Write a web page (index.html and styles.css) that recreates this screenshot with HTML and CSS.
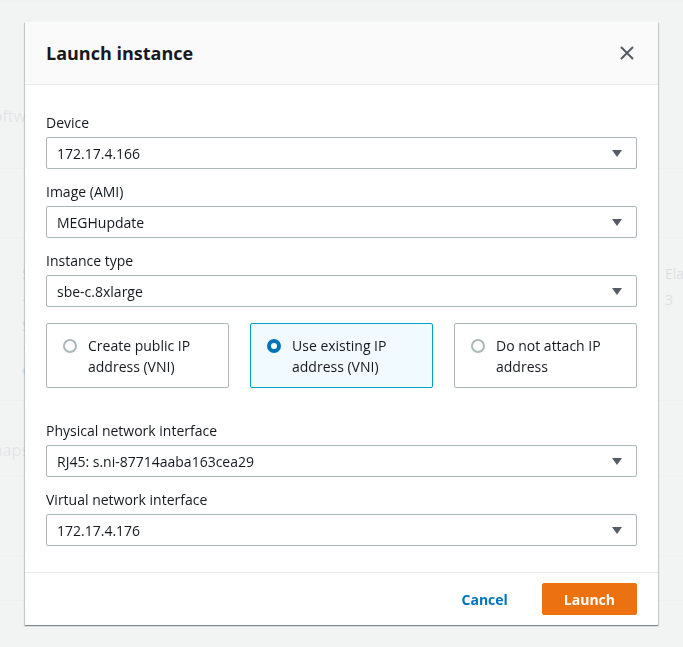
FILE: index.html
```html
<!DOCTYPE html>
<html lang="en">
<head>
  <meta charset="UTF-8" />
  <meta name="viewport" content="width=device-width, initial-scale=1" />
  <title>Launch instance</title>
  <link rel="stylesheet" href="styles.css">
</head>
<body>
  <!-- page behind the modal -->
  <div class="page">
    <div class="page-top">
      <span class="crumb">Software</span>
    </div>
    <div class="page-band"></div>
    <div class="page-cards">
      <div class="page-col">
        <p>Status</p>
        <p>-</p>
        <p>Storage</p>
        <p>1 TB</p>
        <span class="dot"></span>
      </div>
      <div class="page-col right">
        <p>Elastic IPs</p>
        <p>3</p>
      </div>
    </div>
    <div class="page-row"><span class="crumb">Snapshots</span></div>
    <div class="page-row tall"></div>
    <div class="page-row short"></div>
  </div>

  <div class="overlay">
    <div class="modal">
      <div class="modal-header">
        <h2>Launch instance</h2>
        <button class="close" type="button">
          <svg width="14" height="14" viewBox="0 0 14 14"><path d="M1 1L13 13M13 1L1 13" /></svg>
        </button>
      </div>

      <div class="modal-body">
        <div class="field">
          <label>Device</label>
          <div class="select"><span>172.17.4.166</span><i class="caret"></i></div>
        </div>
        <div class="field">
          <label>Image (AMI)</label>
          <div class="select"><span>MEGHupdate</span><i class="caret"></i></div>
        </div>
        <div class="field last">
          <label>Instance type</label>
          <div class="select"><span>sbe-c.8xlarge</span><i class="caret"></i></div>
        </div>

        <div class="tiles">
          <div class="tile">
            <span class="radio"></span>
            <span class="tile-text">Create public IP address (VNI)</span>
          </div>
          <div class="tile selected">
            <span class="radio"></span>
            <span class="tile-text">Use existing IP address (VNI)</span>
          </div>
          <div class="tile">
            <span class="radio"></span>
            <span class="tile-text">Do not attach IP address</span>
          </div>
        </div>

        <div class="field">
          <label>Physical network interface</label>
          <div class="select"><span>RJ45: s.ni-87714aaba163cea29</span><i class="caret"></i></div>
        </div>
        <div class="field">
          <label>Virtual network interface</label>
          <div class="select"><span>172.17.4.176</span><i class="caret"></i></div>
        </div>
      </div>

      <div class="modal-footer">
        <button class="btn-link" type="button">Cancel</button>
        <button class="btn-primary" type="button">Launch</button>
      </div>
    </div>
  </div>
</body>
</html>
```

FILE: styles.css
```css
body {
  margin: 0;
  font-family: 'Open Sans', 'Liberation Sans', sans-serif;
  font-size: 14px;
  color: #16191f;
  background: #f2f3f3;
}

/* background page */
.page {
  border-top: 2px solid #dfe3e3;
  overflow: hidden;
  height: 645px;
}

.page-top {
  height: 167px;
  border-bottom: 1px solid #d5dbdb;
  padding-top: 103px;
  box-sizing: border-box;
}

.crumb {
  display: inline-block;
  margin-left: -16px;
  font-size: 16px;
  color: #545b64;
}

.page-band {
  height: 68px;
  border-bottom: 1px solid #d5dbdb;
}

.page-cards {
  height: 163px;
  border-bottom: 1px solid #d5dbdb;
  display: flex;
  justify-content: space-between;
  padding-top: 26px;
  box-sizing: border-box;
}

/* only the edge of each column shows beside the modal */
.page-col {
  margin-left: 22px;
  width: 3px;
  overflow: hidden;
  white-space: nowrap;
  line-height: 20px;
}

.page-col p {
  margin: 0 0 6px;
}

.page-col.right {
  width: 18px;
  margin-left: 0;
}

.dot {
  display: block;
  width: 6px;
  height: 6px;
  border-radius: 50%;
  background: #0073bb;
}

.page-row {
  height: 76px;
  border-bottom: 1px solid #d5dbdb;
  padding-top: 38px;
  box-sizing: border-box;
}

.page-row.tall {
  height: 79px;
}

.page-row.short {
  height: 45px;
}

/* modal */
.overlay {
  position: fixed;
  inset: 0;
  background: rgba(242, 243, 243, 0.9);
  display: flex;
  align-items: center;
  justify-content: center;
}

.modal {
  width: 633px;
  background: #fff;
  box-shadow: 0 1px 1px 0 rgba(0, 28, 36, 0.3), 1px 1px 1px 0 rgba(0, 28, 36, 0.15), -1px 1px 1px 0 rgba(0, 28, 36, 0.15);
}

.modal-header {
  display: flex;
  align-items: center;
  justify-content: space-between;
  padding: 20px 21px;
  background: #fafafa;
  border-bottom: 1px solid #eaeded;
}

.modal-header h2 {
  margin: 0;
  font-size: 18px;
  line-height: 22px;
  font-weight: 700;
}

.close {
  border: none;
  background: none;
  padding: 0;
  margin-right: 3px;
  display: flex;
}

.close path {
  stroke: #545b64;
  stroke-width: 2;
}

.modal-body {
  padding: 26px 21px;
}

.field {
  margin-bottom: 11px;
}

.field:last-child {
  margin-bottom: 0;
}

.field.last {
  margin-bottom: 16px;
}

.field label {
  display: block;
  line-height: 24px;
  margin-bottom: 2px;
}

.select {
  height: 32px;
  box-sizing: border-box;
  border: 1px solid #aab7b8;
  border-radius: 2px;
  padding: 0 14px 0 10px;
  display: flex;
  align-items: center;
  justify-content: space-between;
}

.caret {
  width: 0;
  height: 0;
  border-left: 5.5px solid transparent;
  border-right: 5.5px solid transparent;
  border-top: 7px solid #545b64;
}

.tiles {
  display: grid;
  grid-template-columns: repeat(3, 1fr);
  gap: 21px;
  margin-bottom: 31px;
}

.tile {
  display: flex;
  align-items: flex-start;
  gap: 11px;
  border: 1px solid #aab7b8;
  border-radius: 2px;
  padding: 11px 16px 10px;
  line-height: 21px;
}

.tile.selected {
  border-color: #00a1c9;
  background: #f1faff;
}

.radio {
  flex: none;
  width: 14px;
  height: 14px;
  box-sizing: border-box;
  border: 2px solid #aab7b8;
  border-radius: 50%;
  background: #fff;
  margin-top: 4px;
}

.tile.selected .radio {
  border: 4px solid #0073bb;
}

.modal-footer {
  display: flex;
  justify-content: flex-end;
  align-items: center;
  gap: 14px;
  padding: 10px 21px;
  border-top: 1px solid #eaeded;
}

.btn-link,
.btn-primary {
  font-family: inherit;
  font-size: 14px;
  font-weight: 700;
  height: 32px;
  border-radius: 2px;
  cursor: pointer;
}

.btn-link {
  border: none;
  background: none;
  color: #0073bb;
  padding: 0 20px;
}

.btn-primary {
  border: 1px solid #ec7211;
  background: #ec7211;
  color: #fff;
  padding: 0 21px;
}
```
